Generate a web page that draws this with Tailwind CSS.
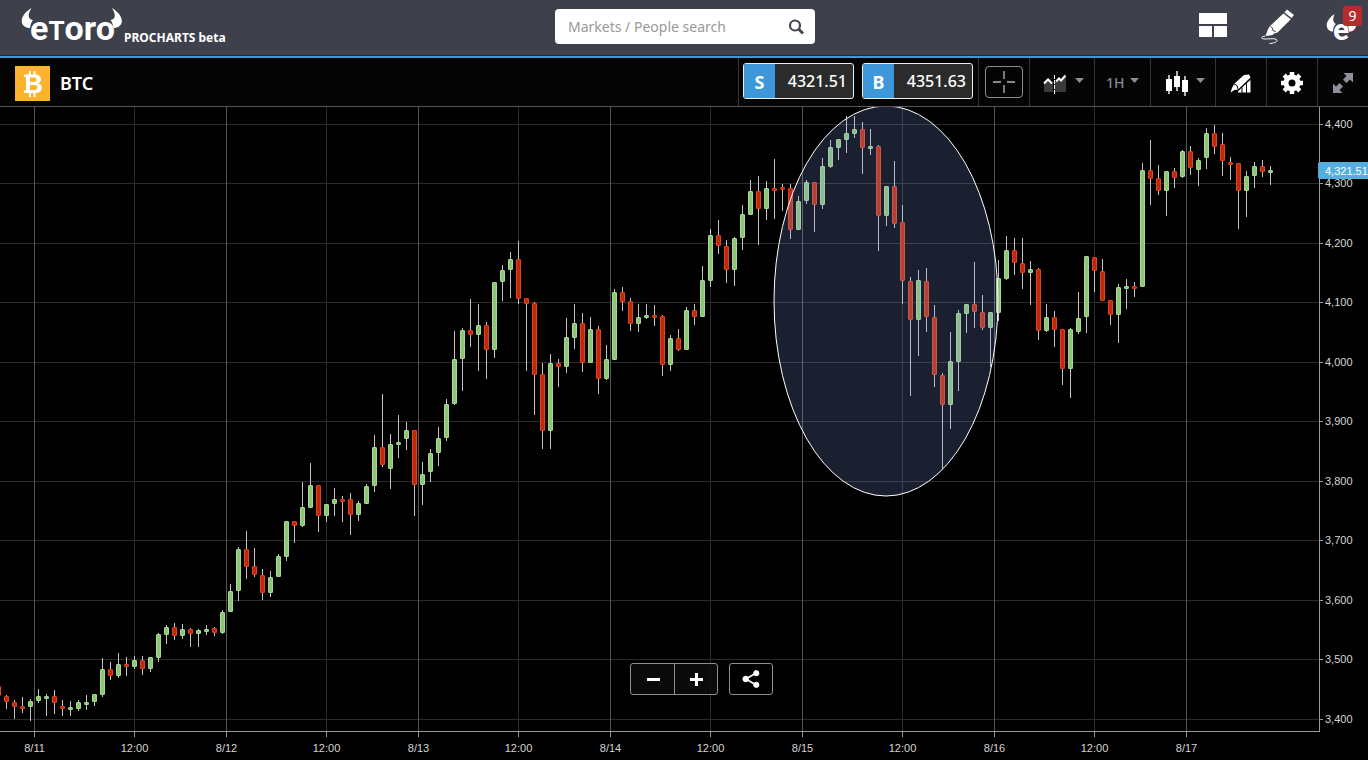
<!DOCTYPE html>
<html lang="en">
<head>
<meta charset="utf-8">
<meta name="viewport" content="width=device-width, initial-scale=1">
<title>ProCharts - BTC</title>
<script src="https://cdn.jsdelivr.net/npm/@tailwindcss/browser@4"></script>
</head>
<body class="bg-black text-white font-['Noto_Sans','Open_Sans',sans-serif]">
<header class="grid grid-cols-[1fr_auto_1fr] items-start h-[58px] bg-[#3e404b] border-b-2 border-[#3e97db] pl-5 pr-[18px] shadow-[inset_0_-1px_0_#26282e]">
  <a href="#" class="flex items-start" aria-label="eToro ProCharts beta">
    <svg class="w-[104px] h-[44px] shrink-0 overflow-visible" viewBox="20 0 104 44" fill="#fff" font-family="Roboto, sans-serif">
      <path d="M31.500 8C25 12 21.500 17 21.700 21.500C22 25.500 25.500 28 30 28C30.500 24.500 31.500 22 33 20C30 19.500 28.700 18 28.700 15.500C28.700 13 30 10.500 31.500 8Z"/>
      <path d="M112 8C118.500 12 122 17 121.800 21.500C121.500 25.500 118 28 113.500 28C113 24.500 112 22 110.500 20C113.500 19.500 114.800 18 114.800 15.500C114.800 13 113.500 10.500 112 8Z"/>
      <text x="30" y="40" font-size="34" font-weight="700">e<tspan font-size="26">T</tspan>oro</text>
    </svg>
    <span class="mt-7 text-xs leading-5 font-bold whitespace-nowrap">PROCHARTS beta</span>
  </a>
  <form class="relative mt-[9px]" onsubmit="return false">
    <input type="text" aria-label="Markets / People search" placeholder="Markets / People search" class="block w-[260px] h-[35px] rounded bg-white pl-[13px] pr-10 text-sm text-[#444] placeholder:text-[#999] outline-none">
    <button type="submit" aria-label="Search" class="absolute right-[10px] top-[9px]">
      <svg class="block size-[18px]" viewBox="0 0 18 18" fill="none" stroke="#444753"><circle cx="8" cy="7.500" r="5" stroke-width="2.200"/><path d="M11.500 11L16 15.500" stroke-width="3"/></svg>
    </button>
  </form>
  <nav class="flex justify-end items-start" aria-label="Account">
    <button type="button" aria-label="Layout" class="mt-[13px] mr-[34px]">
      <svg class="block w-7 h-6" viewBox="0 0 28 24" fill="#fff"><path d="M0 0H28V11H0ZM0 13H13V24H0ZM15 13H28V24H15Z"/></svg>
    </button>
    <button type="button" aria-label="Draw" class="mt-[9px] mr-[31px]">
      <svg class="block w-[34px] h-9" viewBox="0 0 34 36" fill="#fff"><path d="M26 0.500L33 6L30.600 9L23.400 3.400ZM22.400 4.500L29.800 10.200L16.500 23.500L13 24.500L11.500 26L5.500 27L4.800 26L7 20.200L9 17Z"/><path d="M9.500 17.500L11.500 19L11.800 21.500L14.800 22.500" fill="none" stroke="#3e404b"/><path d="M4.500 27C0 27.500 -1 30 4 30C8 30 15 29 16 31C16.500 33 12 34.500 8.500 34.500" fill="none" stroke="#fff" stroke-width="1"/></svg>
    </button>
    <button type="button" aria-label="Notifications, 9 new" class="relative mt-[13px] mr-[-12px] w-9 h-[29px]">
      <svg class="block w-8 h-[29px] overflow-visible" viewBox="0 0 32 29" fill="#fff"><path d="M8.500 1C4 4 0.500 8.500 0.700 12.500C1 16.500 4 18.500 7 18.500C7 15 8 12.500 10 11C7.500 10 7 7.500 7.300 5Z"/><path d="M22.500 1C27 4 30 8.500 30 12.500C29.500 16.500 27 18.500 23 18.500C23 15 22 12.500 20.500 11C23 10 24 7.500 23.700 5Z"/><text x="7" y="27" font-family="Roboto, sans-serif" font-weight="700" font-size="30">e</text></svg>
      <span class="absolute right-0 top-[-7px] w-[19px] h-5 rounded-[3px] bg-[#b62b2d] text-sm leading-5 text-center">9</span>
    </button>
  </nav>
</header>

<section class="flex h-[49px] bg-[#050505] border-b border-[#555]" aria-label="Chart toolbar">
  <div class="flex flex-1 items-start pl-[15px] pt-2">
    <svg class="block size-[35px]" viewBox="0 0 35 35"><rect width="35" height="35" fill="#fdb32b"/><g fill="#fff"><path d="M14 5h2v4h-2zM18.500 5h2v4h-2zM14 27h2v4h-2zM18.500 27h2v4h-2zM9 8.500h5v2.500h-5zM9 24.500h5v2.500h-5z"/><path fill-rule="evenodd" d="M11 8.500H20C27.500 8.500 27.500 16 23 17.200C28.500 18 28.500 27 20.500 27H11ZM15 11.500V16H19C22.500 16 22.500 11.500 19 11.500ZM15 19V24H19.500C23.500 24 23.500 19 19.500 19Z"/></g></svg>
    <h1 class="ml-2.5 mt-[5px] text-lg leading-6 font-semibold">BTC</h1>
  </div>
  <div class="flex w-60 gap-2 border-l border-[#333] pl-1 pt-[5px]">
    <button type="button" class="flex w-[111px] h-9 rounded-[3px] border border-[#eee] bg-[#2b2b2b] overflow-hidden text-base leading-[34px] font-medium"><span class="w-[31px] bg-[#3e97db] text-lg leading-9 font-bold">S</span><span class="flex-1 text-right pr-1.5">4321.51</span></button>
    <button type="button" class="flex w-[111px] h-9 rounded-[3px] border border-[#eee] bg-[#2b2b2b] overflow-hidden text-base leading-[34px] font-medium"><span class="w-[31px] bg-[#3e97db] text-lg leading-9 font-bold">B</span><span class="flex-1 text-right pr-1.5">4351.63</span></button>
  </div>
  <div class="w-[51px] border-l border-[#333] pl-1.5 pt-2">
    <button type="button" aria-label="Crosshair" class="block w-[38px] h-8 rounded-[4px] border border-[#8c8c8c]"><svg class="block mx-auto size-[22px]" viewBox="0 0 22 22" fill="none" stroke="#85878e"><path d="M11 0V8M11 14V22M0 11H8M14 11H22" stroke-width="1.800"/></svg></button>
  </div>
  <button type="button" aria-label="Compare" class="flex items-start w-[65px] border-l border-[#333] pl-[13px] pt-4 gap-2">
    <svg class="block w-[24px] h-5" viewBox="0 0 24 20"><path d="M1 9L6 5L10 9V18H1ZM12 8L16 5L18 6L23 2V18H12Z" fill="#3a3a3a"/><path d="M1 9.500L5 5.500L9 9.500M13 7.500L16 4.500L18 6.500L22.500 1.500" fill="none" stroke="#fff" stroke-width="2"/><path d="M11.500 1V20" stroke="#fff" stroke-dasharray="4 1"/></svg>
    <svg class="block w-[9px] h-[5px] mt-1" viewBox="0 0 9 5" fill="#8d909b"><path d="M0 0H9L4.500 5Z"/></svg>
  </button>
  <button type="button" aria-label="Interval 1H" class="flex items-start w-14 border-l border-[#333] pl-[11px] pt-[15px] gap-1.5 text-sm leading-5 text-[#858a93] font-medium">
    <span>1H</span>
    <svg class="block w-[9px] h-[5px] mt-[5px]" viewBox="0 0 9 5" fill="#8d909b"><path d="M0 0H9L4.500 5Z"/></svg>
  </button>
  <button type="button" aria-label="Chart type" class="flex items-start w-[65px] border-l border-[#333] pl-3.5 pt-[13px] gap-[7px]">
    <svg class="block w-6 h-[26px]" viewBox="0 0 24 26" fill="#fff"><path d="M1 8H7V20H1ZM3.300 4H4.700V23H3.300ZM9 5H15V16H9ZM11.300 0H12.700V20H11.300ZM17 9H23V21H17ZM19.300 5H20.700V25H19.300Z"/></svg>
    <svg class="block w-[9px] h-[5px] mt-[7px]" viewBox="0 0 9 5" fill="#8d909b"><path d="M0 0H9L4.500 5Z"/></svg>
  </button>
  <button type="button" aria-label="Studies" class="flex items-start w-[51px] border-l border-[#333] pl-3.5 pt-4">
    <svg class="block w-[22px] h-5" viewBox="0 0 22 20" fill="#fff"><path d="M14 1L19 0.500L20.500 3.500L8 15.500L4.500 16L0.500 18.500L2 14L4 10ZM20.500 6V18.500H17V9ZM16 10V18.500H12.500V13ZM11.500 14V18.500H8V17.500Z"/><path d="M4 10L7 11.500L8 15" fill="none" stroke="#050505"/></svg>
  </button>
  <button type="button" aria-label="Settings" class="flex items-start w-[51px] border-l border-[#333] pl-3.5 pt-3.5">
    <svg class="block size-[22px]" viewBox="0 0 22 22" fill="none" stroke="#fff"><circle cx="11" cy="11" r="6" stroke-width="5"/><path d="M11 0V4M11 18V22M0 11H4M18 11H22M3.200 3.200L6 6M16 16L18.800 18.800M18.800 3.200L16 6M6 16L3.200 18.800" stroke-width="4.500"/></svg>
  </button>
  <button type="button" aria-label="Full screen" class="flex items-start w-[51px] border-l border-[#333] pl-[15px] pt-[15px]">
    <svg class="block size-5" viewBox="0 0 20 20" fill="#8d909b"><path d="M10.500 0H20V9.500L17 6.500L13.500 10L10 6.500L13.500 3ZM9.500 20H0V10.500L3 13.500L6.500 10L10 13.500L6.500 17Z"/></svg>
  </button>
</section>

<main class="relative">
  <svg id="chart" class="block w-full" viewBox="0 107 1368 653" role="img" aria-label="BTC hourly candlestick chart" font-family="'Liberation Sans', Arial, sans-serif" font-size="11" fill="#d6d6d6"></svg>
  <div class="absolute inset-x-0 bottom-[65px] flex justify-center gap-[11px] pl-[35px]">
    <div class="flex rounded-[3px] border border-[#8f8f8f] bg-[#0c0c0c]/80">
      <button type="button" aria-label="Zoom out" class="flex items-center justify-center w-[44px] h-[30px] pl-0.5 border-r border-[#8f8f8f]"><svg class="block size-[13px]" viewBox="0 0 13 13" fill="#fff"><path d="M0 5H13V8H0Z"/></svg></button>
      <button type="button" aria-label="Zoom in" class="flex items-center justify-center w-[42px] h-[30px]"><svg class="block size-[13px]" viewBox="0 0 13 13" fill="#fff"><path d="M0 5H5V0H8V5H13V8H8V13H5V8H0Z"/></svg></button>
    </div>
    <button type="button" aria-label="Share" class="flex items-center justify-center w-11 h-8 rounded-[3px] border border-[#8f8f8f] bg-black"><svg class="block size-[18px]" viewBox="0 0 18 18" fill="#fff" stroke="#fff"><path d="M14 3L4 9L14 15" fill="none" stroke-width="1.600"/><circle cx="14.300" cy="3.200" r="2.600"/><circle cx="3.700" cy="9" r="2.800"/><circle cx="14.300" cy="14.800" r="2.600"/></svg></button>
  </div>
</main>

<script>
// One entry per hourly candle: direction, wick top, body top, body bottom, wick bottom
const candles = `r686,686,696,696 r695,696,702,709 r700,702,707,719 r697,706,709,713 g699,701,707,721 g689,696,701,703 g694,696,699,716 r690,696,703,714
r700,706,709,716 g701,707,710,716 g700,702,709,711 g695,702,705,710 g694,694,702,706 g658,669,695,697 r662,669,676,680 g653,664,676,678
r657,664,667,676 g656,660,667,669 r656,660,669,675 g657,657,669,672 g633,634,658,662 g625,627,635,644 r623,627,636,640 g624,629,636,639
r628,629,634,647 g629,630,634,647 g625,629,632,635 r627,628,633,636 g610,612,633,634 g584,591,612,612 g547,549,591,601 r531,549,567,579
r548,566,575,577 r569,575,593,600 g571,577,593,597 g554,556,577,577 g521,521,557,561 r521,521,526,543 g482,507,526,527 g463,485,508,508
r485,485,516,532 g504,504,516,522 g488,499,504,516 r496,499,502,522 r493,499,515,535 g501,503,515,521 g484,486,504,504 g435,447,486,492
r394,447,465,467 g434,444,469,489 g415,442,445,458 g422,430,439,450 r430,430,485,516 g462,474,485,505 g449,453,472,482 g427,438,453,466
g399,404,438,441 g331,359,404,405 g328,330,359,391 r299,330,335,347 g304,325,335,371 r322,325,350,379 g282,282,350,358 g265,270,282,301
g252,259,270,298 r241,259,299,304 r298,298,304,371 r302,303,375,415 r363,374,431,449 g354,363,431,449 r359,363,367,387 g318,337,367,373
g304,323,338,349 r313,323,363,372 g317,329,363,363 r326,329,379,394 g345,359,379,380 g289,292,360,360 r287,292,302,311 r298,301,324,331
g304,317,324,332 g304,315,318,319 r305,315,318,326 r315,316,365,376 g335,338,365,371 r329,338,350,351 g307,310,350,350 r304,310,317,325
g266,280,317,317 g229,235,281,287 r220,235,246,254 r240,246,270,283 g237,238,270,286 g205,214,238,250 g180,191,215,215 r176,191,209,245
g181,188,209,220 r159,188,191,219 r184,187,190,211 r184,188,230,239 g196,201,230,230 g180,182,201,204 r182,182,205,232 g158,166,205,209
g140,147,167,168 g139,139,148,160 g116,133,140,153 g116,129,134,138 r122,129,148,174 g129,146,149,155 r145,146,216,251 g186,186,216,226
r161,186,224,228 r205,222,281,304 r277,281,320,396 g270,280,320,356 r268,281,317,332 r305,317,375,387 r373,375,405,469 g332,361,405,429
g310,313,362,391 g304,304,314,333 r262,304,312,328 r295,312,328,330 g312,312,328,367 g260,278,313,321 g236,250,279,280 r238,250,263,275
r238,263,273,289 g261,269,273,305 r268,269,331,340 g304,317,331,332 r311,317,330,347 r329,329,369,385 g328,329,369,398 g292,318,332,334
g256,256,317,333 r257,257,271,292 r259,271,301,301 r300,300,315,325 g284,287,315,343 g279,286,289,309 r282,286,289,297 g163,170,287,287
r140,170,179,205 r165,178,191,195 g171,171,191,216 r168,171,178,188 g150,151,177,178 r146,151,168,175 g158,160,170,186 g128,133,158,169
r125,133,147,154 r133,144,161,176 r157,162,165,180 r163,163,191,229 g171,176,191,217 g162,166,176,188 r160,166,172,177 g166,170,173,185`.split(/\s+/);

const line = (x1, y1, x2, y2, c) => `<line x1="${x1}" y1="${y1}" x2="${x2}" y2="${y2}" stroke="${c}"/>`;
let out = '';
const rows = [124, 183, 243, 302, 362, 421, 481, 540, 600, 659, 719];
rows.forEach(y => { out += line(0, y + .5, 1319, y + .5, '#2b2b2b'); });
for (let d = 0; d < 7; d++) {
  const x = 34.5 + d * 192;
  out += line(x, 107, x, 731, '#545454') + line(x, 732, x, 737, '#999') +
    `<text x="${x}" y="752" text-anchor="middle">8/${11 + d}</text>`;
  if (d < 6) out += line(x + 100, 107, x + 100, 731, '#2b2b2b') + line(x + 100, 732, x + 100, 737, '#999') +
    `<text x="${x + 100}" y="752" text-anchor="middle">12:00</text>`;
}
candles.forEach((s, i) => {
  const [a, b, c, d] = s.slice(1).split(',').map(Number);
  const x = 8 * i - 2, up = s[0] === 'g';
  out += line(x + .5, a, x + .5, d, '#c4c4c4') +
    `<rect x="${x - 1.5}" y="${b + .5}" width="4" height="${c - b - 1}" rx="0.500" fill="${up ? '#8fc378' : '#bb2a0c'}" stroke="${up ? '#a9d696' : '#e3421c'}"/>`;
});
out += '<ellipse cx="886" cy="301" rx="112" ry="195" fill="#84a0f0" fill-opacity="0.200" stroke="#fff"/>';
out += line(1319.5, 107, 1319.5, 731, '#999') + line(0, 731.5, 1320, 731.5, '#999');
rows.forEach((y, i) => {
  out += line(1320, y + .5, 1323, y + .5, '#999') + `<text x="1325" y="${y + 4}">${(4400 - i * 100).toLocaleString('en-US')}</text>`;
});
out += '<rect x="1318" y="162" width="54" height="17" rx="2" fill="#55afde"/><text x="1325" y="175" fill="#fff">4,321.51</text>';
document.getElementById('chart').innerHTML = out;
</script>
</body>
</html>
